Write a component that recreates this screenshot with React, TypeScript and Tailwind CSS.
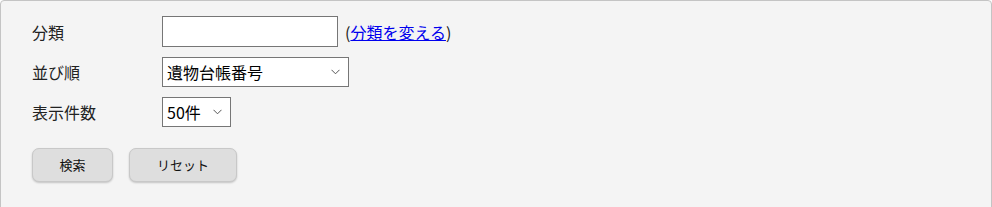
import React from 'react';

const jp = { fontFamily: '"Noto Sans CJK JP", "Noto Sans", sans-serif' };

function Chevron() {
  return (
    <svg width="9" height="6" viewBox="0 0 9 6" className="pointer-events-none absolute right-[8px] top-1/2 -translate-y-1/2">
      <path d="M0.5 0.8 L4.5 4.8 L8.5 0.8" fill="none" stroke="#555" strokeWidth="1" />
    </svg>
  );
}

export default function App() {
  return (
    <div className="w-[992px] h-[207px] overflow-hidden bg-white" style={jp}>
      <div className="h-[240px] border border-[#c4c4c4] rounded-[4px] bg-[#f4f4f4] pl-[31px] pt-[15px]">
        <div className="grid grid-cols-[130px_auto] items-center gap-y-[10px] text-[16px] text-[#222]">
          <div>分類</div>
          <div className="flex items-center gap-[7px]">
            <input className="w-[176px] h-[31px] border border-[#767676] bg-white outline-none" />
            <span className="text-[16px]">
              (<a href="#" className="text-[#0000ee] underline">分類を変える</a>)
            </span>
          </div>
          <div>並び順</div>
          <div className="relative w-[187px] h-[30px] border border-[#767676] bg-white flex items-center pl-[4px] text-[16px] text-black">
            遺物台帳番号
            <Chevron />
          </div>
          <div>表示件数</div>
          <div className="relative w-[69px] h-[30px] border border-[#767676] bg-white flex items-center pl-[4px] text-[16px] text-black">
            50件
            <Chevron />
          </div>
        </div>
        <div className="flex gap-[16px] mt-[21px] text-[13px] text-[#111]">
          <button className="w-[81px] h-[34px] rounded-[7px] border border-[#c8c8c8] bg-[#dedede] shadow-[0_1px_2px_rgba(0,0,0,0.2)]">検索</button>
          <button className="w-[108px] h-[34px] rounded-[7px] border border-[#c8c8c8] bg-[#dedede] shadow-[0_1px_2px_rgba(0,0,0,0.2)]">リセット</button>
        </div>
      </div>
    </div>
  );
}
